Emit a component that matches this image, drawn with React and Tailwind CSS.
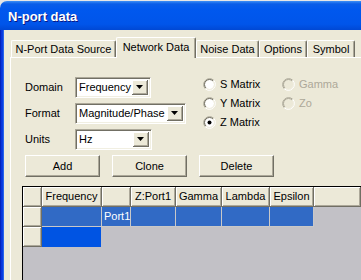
import React from "react";

const raised =
  "bg-[#ECE9D8] border-r border-b border-[#716F64] shadow-[inset_1px_1px_0_#ffffff,inset_-1px_-1px_0_#ACA899]";

function Radio({ checked, disabled }) {
  return (
    <svg width="13" height="13" viewBox="0 0 13 13" className="shrink-0">
      <circle cx="6.5" cy="6.5" r="4.5" fill={disabled ? "#ECE9D8" : "#ffffff"} />
      <path d="M2.26 10.74 A6 6 0 0 1 10.74 2.26" stroke="#ACA899" fill="none" />
      <path d="M10.74 2.26 A6 6 0 0 1 2.26 10.74" stroke="#ffffff" fill="none" />
      <path d="M2.96 10.04 A5 5 0 0 1 10.04 2.96" stroke={disabled ? "#ACA899" : "#716F64"} fill="none" />
      <path d="M10.04 2.96 A5 5 0 0 1 2.96 10.04" stroke="#F1EFE2" fill="none" />
      {checked && <circle cx="6.5" cy="6.5" r="2" fill="#000000" />}
    </svg>
  );
}

function RadioItem({ label, checked, disabled }) {
  return (
    <div className="h-[19px] flex items-center gap-[4px]">
      <Radio checked={checked} disabled={disabled} />
      <span className={disabled ? "text-[#ACA899]" : "text-black"}>{label}</span>
    </div>
  );
}

function Combo({ value, width }) {
  return (
    <div
      className={`${width} h-[21px] flex bg-white border border-t-[#ACA899] border-l-[#ACA899] border-b-white border-r-white shadow-[inset_1px_1px_0_#716F64,inset_-1px_-1px_0_#F1EFE2] p-[2px]`}
    >
      <div className="flex-1 flex items-center pl-[1px] leading-none">{value}</div>
      <div className={`w-[16px] ${raised} flex items-center justify-center`}>
        <svg width="7" height="4" viewBox="0 0 7 4">
          <path d="M0 0 H7 L3.5 4 Z" fill="#000000" />
        </svg>
      </div>
    </div>
  );
}

function Button({ children }) {
  return (
    <div className="w-[75px] h-[22px] flex items-center justify-center bg-[#ECE9D8] border border-t-white border-l-white border-b-[#716F64] border-r-[#716F64] shadow-[inset_-1px_-1px_0_#ACA899]">
      {children}
    </div>
  );
}

const cols = [
  { name: "Frequency", w: "w-[60px]" },
  { name: "", w: "w-[29px]" },
  { name: "Z:Port1", w: "w-[45px]" },
  { name: "Gamma", w: "w-[46px]" },
  { name: "Lambda", w: "w-[48px]" },
  { name: "Epsilon", w: "w-[44px]" },
];

export default function App() {
  return (
    <div className="w-[361px] h-[280px] overflow-hidden bg-[#E6E6E6] font-['Liberation_Sans',Arial,sans-serif] text-[11px] text-black">
      <div className="mt-px rounded-tl-[7px] overflow-hidden">
        <div className="h-[29px] flex items-center pl-[8px] pt-[3px] bg-[linear-gradient(180deg,#3D8FF5_0%,#0A5DE8_10%,#0058EE_30%,#0055EA_80%,#0048D4_100%)] text-white font-bold text-[13px] [text-shadow:1px_1px_0_#0A1883]">
          N-port data
        </div>
        <div className="flex h-[250px] bg-[#ECE9D8]">
          <div className="w-[4px] bg-[linear-gradient(90deg,#0019A8,#0831D9_30%,#0A3FE0_65%,#3A78F0)]" />
          <div className="flex-1 flex flex-col pl-[6px] pt-[7px]">
            {/* tabs */}
            <div className="h-[20px] flex items-end pl-px relative z-10">
              {[
                { t: "N-Port Data Source", w: "w-[105px]" },
                { t: "Network Data", w: "w-[80px]", sel: true },
                { t: "Noise Data", w: "w-[63px]" },
                { t: "Options", w: "w-[48px]" },
                { t: "Symbol", w: "w-[48px]" },
              ].map((tab) =>
                tab.sel ? (
                  <div
                    key={tab.t}
                    className={`${tab.w} h-[21px] -mb-px bg-[#ECE9D8] border-t border-l border-white border-r border-r-[#716F64] shadow-[inset_-1px_0_0_#ACA899] rounded-t-[2px] flex justify-center pt-[2px] leading-[14px]`}
                  >
                    {tab.t}
                  </div>
                ) : (
                  <div
                    key={tab.t}
                    className={`${tab.w} h-[17px] bg-[#ECE9D8] border-t border-l border-white border-r border-r-[#716F64] shadow-[inset_-1px_0_0_#ACA899] rounded-t-[2px] flex justify-center pt-[1px] leading-[14px]`}
                  >
                    {tab.t}
                  </div>
                )
              )}
            </div>

            {/* panel */}
            <div className="flex-1 flex flex-col border-t border-l border-white">
              <div className="flex pl-[14px] pt-[19px] items-start">
                <div className="w-[178px] flex flex-col gap-[5px]">
                  <div className="flex items-center">
                    <span className="w-[50px]">Domain</span>
                    <Combo value="Frequency" width="w-[76px]" />
                  </div>
                  <div className="flex items-center">
                    <span className="w-[50px]">Format</span>
                    <Combo value="Magnitude/Phase" width="w-[111px]" />
                  </div>
                  <div className="flex items-center">
                    <span className="w-[50px]">Units</span>
                    <Combo value="Hz" width="w-[77px]" />
                  </div>
                </div>
                <div className="-mt-[2px] grid grid-cols-[79px_auto]">
                  <RadioItem label="S Matrix" />
                  <RadioItem label="Gamma" disabled />
                  <RadioItem label="Y Matrix" />
                  <RadioItem label="Zo" disabled />
                  <RadioItem label="Z Matrix" checked />
                </div>
              </div>

              <div className="flex gap-[12px] pl-[14px] mt-[5px]">
                <Button>Add</Button>
                <Button>Clone</Button>
                <Button>Delete</Button>
              </div>

              {/* grid */}
              <div className="flex-1 ml-[11px] mt-[9px] border-t border-l border-black bg-[#C2C1C6] flex flex-col">
                <div className="h-[20px] flex">
                  <div className={`w-[19px] ${raised}`} />
                  {cols.map((c, i) => (
                    <div key={i} className={`${c.w} ${raised} flex items-center justify-center`}>
                      {c.name}
                    </div>
                  ))}
                  <div className={`flex-1 ${raised}`} />
                </div>
                <div className="h-[20px] flex">
                  <div className={`w-[19px] ${raised}`} />
                  {cols.map((c, i) => (
                    <div
                      key={i}
                      className={`${c.w} bg-[#316AC5] border-r border-b border-[#C8C8C8] text-white flex items-center pl-[2px]`}
                    >
                      {i === 1 ? "Port1" : ""}
                    </div>
                  ))}
                </div>
                <div className="h-[20px] flex">
                  <div className={`w-[19px] ${raised}`} />
                  <div className="w-[59px] bg-[#0054E3]" />
                </div>
              </div>
            </div>
          </div>
        </div>
      </div>
    </div>
  );
}
